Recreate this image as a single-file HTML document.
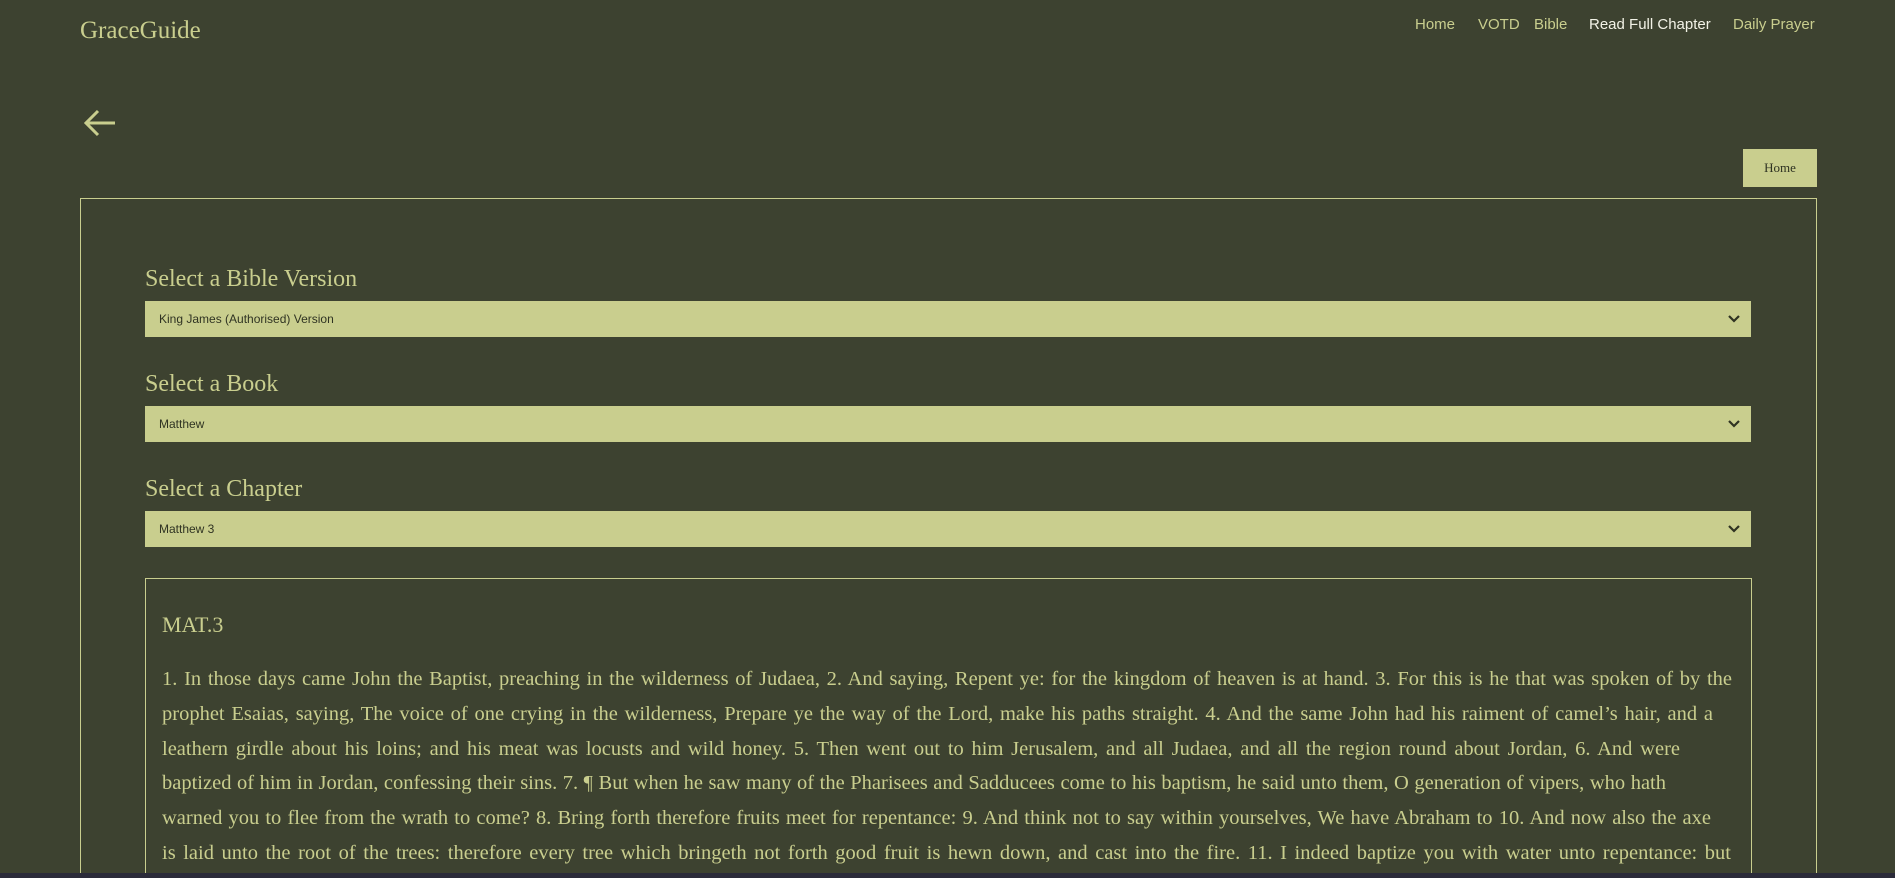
<!DOCTYPE html>
<html><head><meta charset="utf-8"><style>
*{margin:0;padding:0;box-sizing:border-box}
html,body{width:1895px;height:878px;overflow:hidden}
body{background:#3d4230;color:#c9ce8e;font-family:"Liberation Serif",serif;position:relative}
.logo{position:absolute;left:80px;top:17px;font-size:25px}
.nav{position:absolute;top:16px;font-family:"Liberation Sans",sans-serif;font-size:15px;color:#c9ce8e}
.nav span{position:absolute;white-space:nowrap}
.arrow{position:absolute;left:82px;top:108px}
.hbtn{position:absolute;left:1743px;top:149px;width:74px;height:38px;background:#c9ce8e;color:#2f3322;font-size:13px;text-align:center;line-height:38px}
.outer{position:absolute;left:80px;top:198px;width:1737px;height:700px;border:1px solid #c9ce8e}
h2{position:absolute;left:145px;font-size:24px;font-weight:normal;line-height:30px}
.sel{position:absolute;left:145px;width:1606px;height:36px;background:#c9ce8e;color:#2f3322;font-family:"Liberation Sans",sans-serif;font-size:12px;line-height:36px;padding-left:14px}
.sel svg{position:absolute;right:10px;top:13px}
.inner{position:absolute;left:145px;top:578px;width:1607px;height:320px;border:1px solid #c9ce8e}
.mat{position:absolute;left:162px;top:612px;font-size:22px}
.txt{position:absolute;left:162px;top:662px;font-size:20.5px;line-height:34.8px}
.txt div{white-space:nowrap;text-align:justify;text-align-last:justify;overflow:hidden;height:34.8px}
.strip{position:absolute;left:0;top:873px;width:1895px;height:5px;background:#2b2b3a}
</style></head><body>
<div class="logo">GraceGuide</div>
<div class="nav">
<span style="left:1415px">Home</span>
<span style="left:1478px">VOTD</span>
<span style="left:1534px">Bible</span>
<span style="left:1589px;color:#f2f2e6">Read Full Chapter</span>
<span style="left:1733px">Daily Prayer</span>
</div>
<svg class="arrow" width="36" height="30" viewBox="0 0 36 30"><path d="M33 15H4M16 3L4 15l12 12" fill="none" stroke="#c9ce8e" stroke-width="3"/></svg>
<div class="hbtn">Home</div>
<div class="outer"></div>
<h2 style="top:264px">Select a Bible Version</h2>
<div class="sel" style="top:301px">King James (Authorised) Version<svg width="14" height="10" viewBox="0 0 14 10"><path d="M2 2l5 5 5-5" fill="none" stroke="#2f3322" stroke-width="2.2"/></svg></div>
<h2 style="top:369px">Select a Book</h2>
<div class="sel" style="top:406px">Matthew<svg width="14" height="10" viewBox="0 0 14 10"><path d="M2 2l5 5 5-5" fill="none" stroke="#2f3322" stroke-width="2.2"/></svg></div>
<h2 style="top:474px">Select a Chapter</h2>
<div class="sel" style="top:511px">Matthew 3<svg width="14" height="10" viewBox="0 0 14 10"><path d="M2 2l5 5 5-5" fill="none" stroke="#2f3322" stroke-width="2.2"/></svg></div>
<div class="inner"></div>
<div class="mat">MAT.3</div>
<div class="txt">
<div style="width:1570px">1. In those days came John the Baptist, preaching in the wilderness of Judaea, 2. And saying, Repent ye: for the kingdom of heaven is at hand. 3. For this is he that was spoken of by the</div>
<div style="width:1551px">prophet Esaias, saying, The voice of one crying in the wilderness, Prepare ye the way of the Lord, make his paths straight. 4. And the same John had his raiment of camel’s hair, and a</div>
<div style="width:1518px">leathern girdle about his loins; and his meat was locusts and wild honey. 5. Then went out to him Jerusalem, and all Judaea, and all the region round about Jordan, 6. And were</div>
<div style="width:1504px">baptized of him in Jordan, confessing their sins. 7. ¶ But when he saw many of the Pharisees and Sadducees come to his baptism, he said unto them, O generation of vipers, who hath</div>
<div style="width:1549px">warned you to flee from the wrath to come? 8. Bring forth therefore fruits meet for repentance: 9. And think not to say within yourselves, We have Abraham to 10. And now also the axe</div>
<div style="width:1569px">is laid unto the root of the trees: therefore every tree which bringeth not forth good fruit is hewn down, and cast into the fire. 11. I indeed baptize you with water unto repentance: but</div>
</div>
<div class="strip"></div>
</body></html>
